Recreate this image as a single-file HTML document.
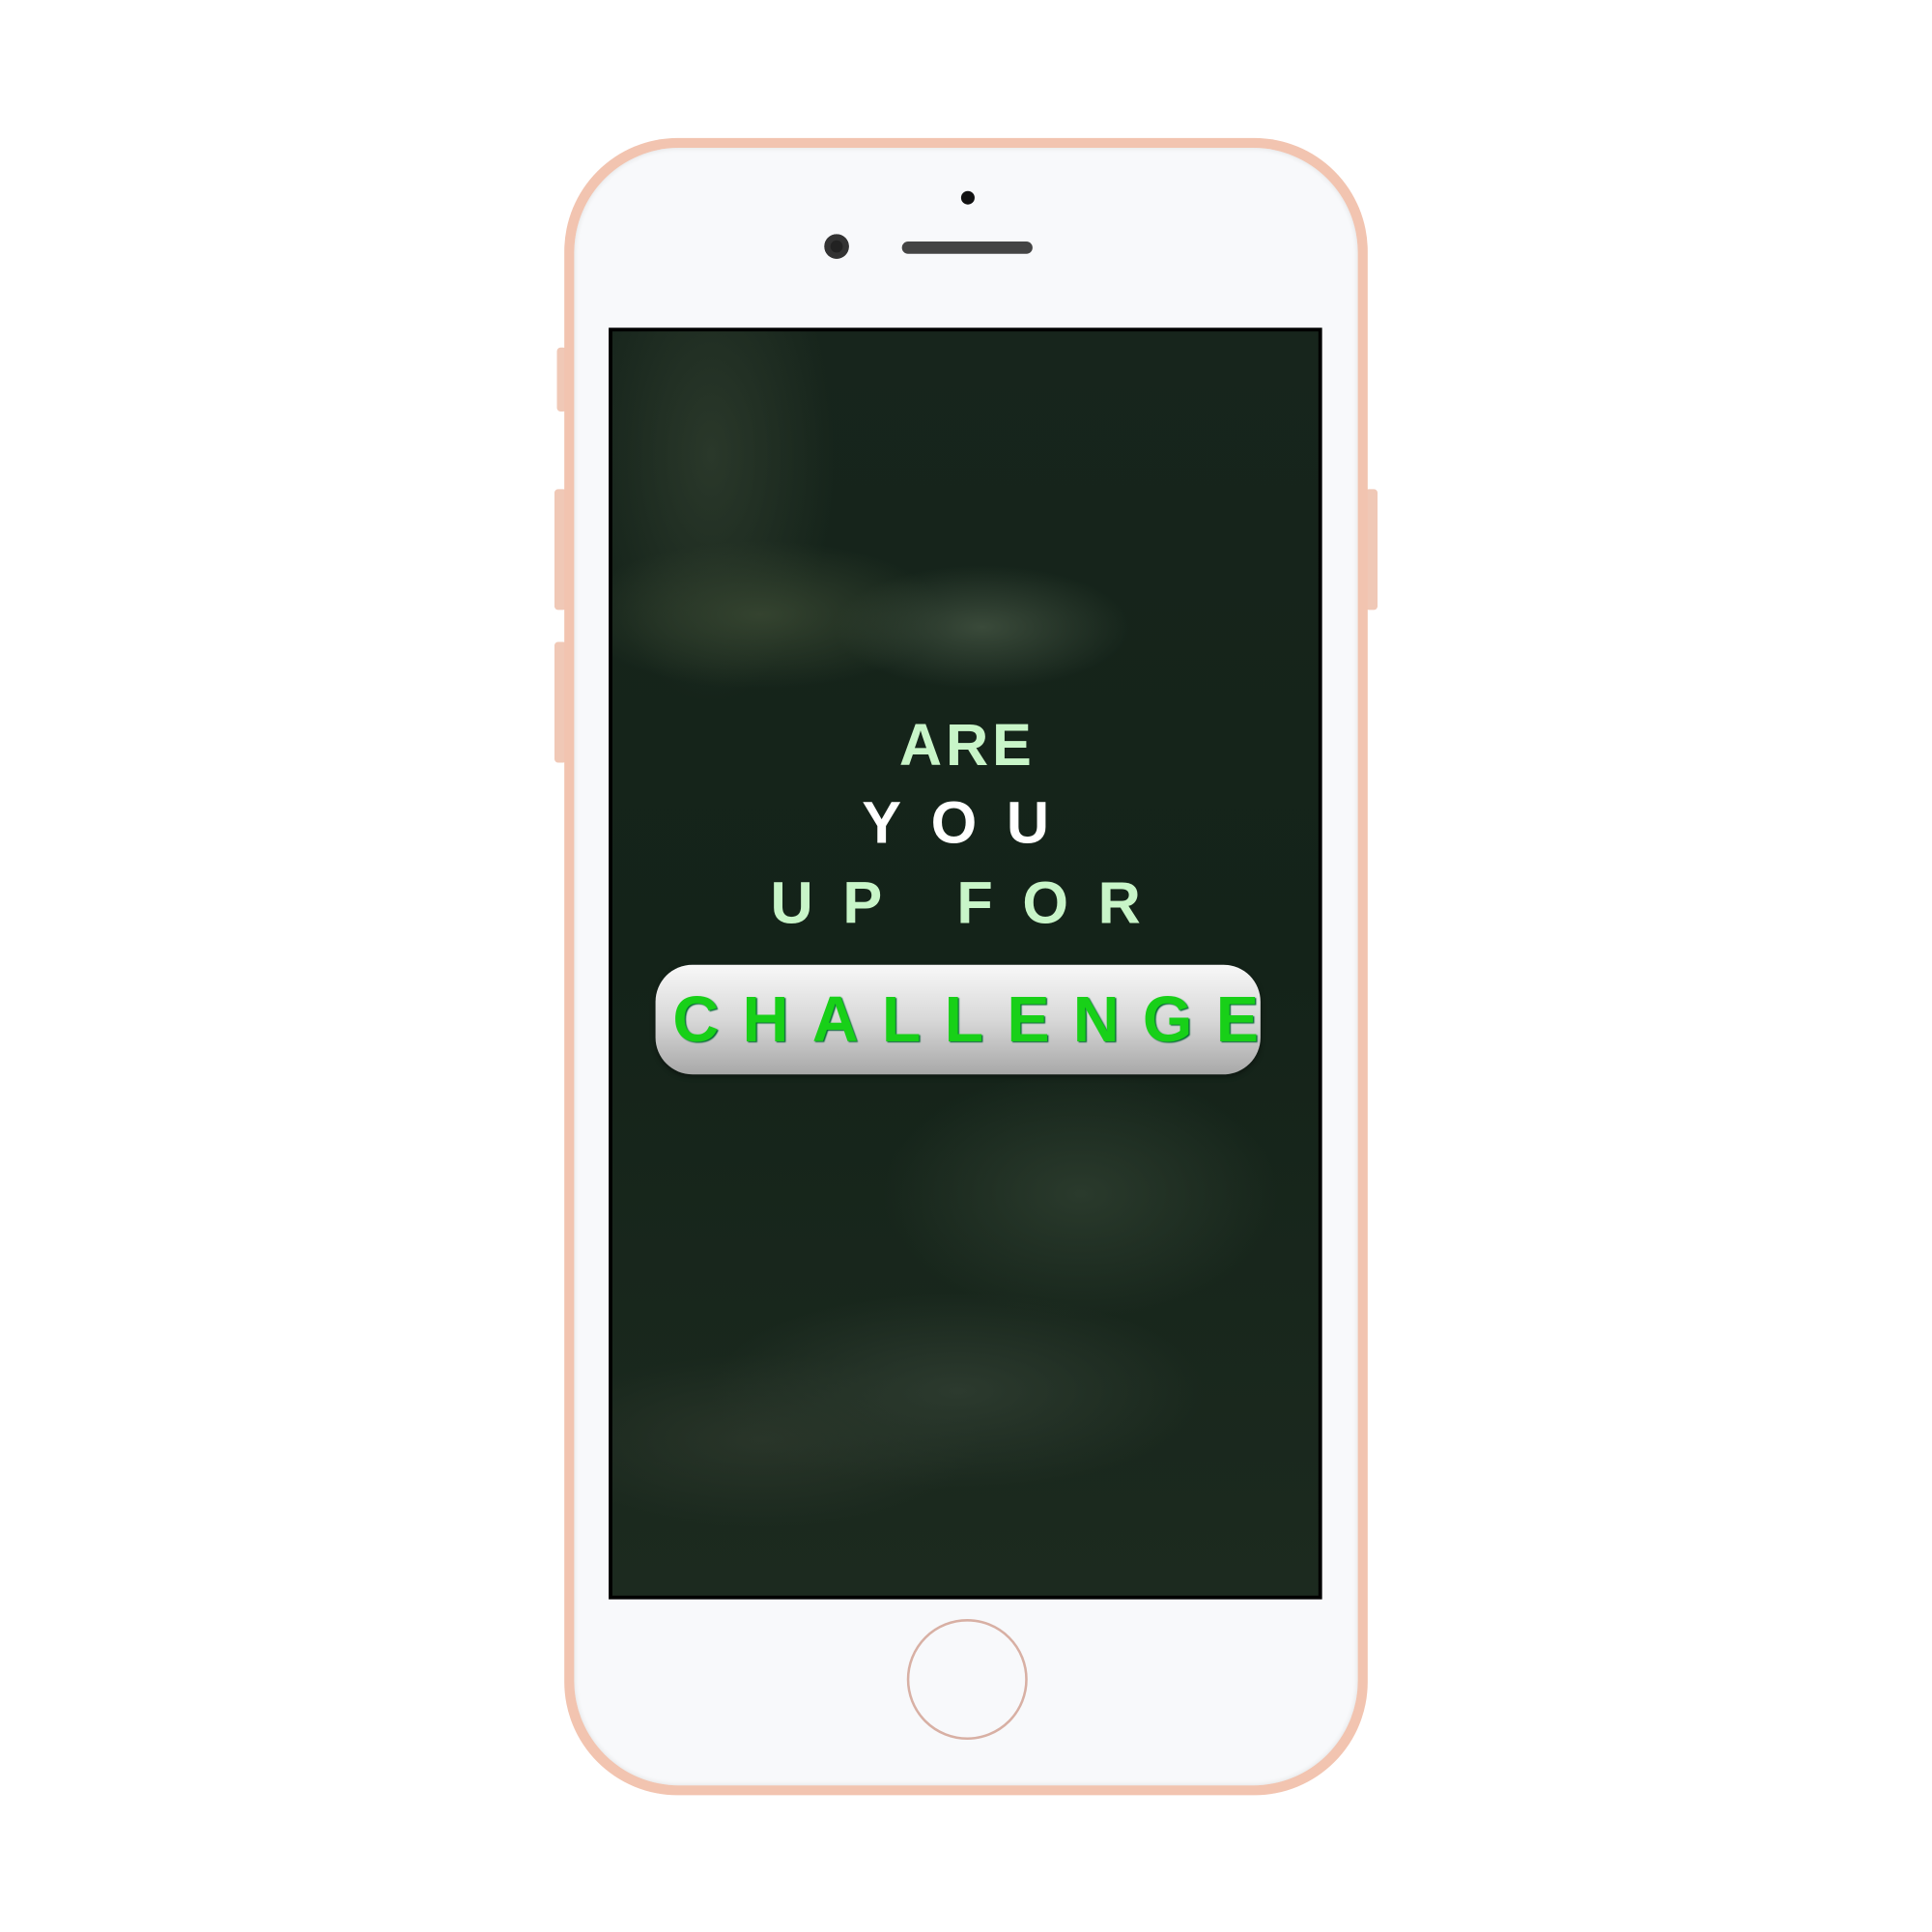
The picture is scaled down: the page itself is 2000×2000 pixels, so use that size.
<!DOCTYPE html>
<html><head><meta charset="utf-8"><style>
html,body{margin:0;padding:0;background:#fff;width:2000px;height:2000px;overflow:hidden}
#c{position:absolute;left:0;top:0;width:1568px;height:1568px;transform:scale(1.27551);transform-origin:0 0}
.abs{position:absolute}
.t{position:absolute;left:494px;width:579px;text-align:center;font-family:"Liberation Sans",sans-serif;font-weight:bold;white-space:nowrap;box-sizing:border-box}
</style></head><body><div id="c">
<div class="abs" style="left:452px;top:282px;width:8px;height:52px;background:#f0c8b6;border-radius:3px"></div>
<div class="abs" style="left:450px;top:397px;width:10px;height:98px;background:#f0c8b6;border-radius:3px"></div>
<div class="abs" style="left:450px;top:521px;width:10px;height:98px;background:#f0c8b6;border-radius:3px"></div>
<div class="abs" style="left:1108px;top:397px;width:10px;height:98px;background:#f0c8b6;border-radius:3px"></div>
<div class="abs" style="left:458px;top:112px;width:652px;height:1345px;border-radius:92px;background:#f2c4b0"></div>
<div class="abs" style="left:466px;top:120px;width:636px;height:1329px;border-radius:85px;background:#f8f9fb;box-shadow:inset 0 0 4px #ddd"></div>
<div class="abs" style="left:780px;top:155px;width:11px;height:11px;border-radius:50%;background:#111"></div>
<div class="abs" style="left:669px;top:190px;width:20px;height:20px;border-radius:50%;background:#222;box-shadow:inset 0 0 0 5px #333"></div>
<div class="abs" style="left:732px;top:196px;width:106px;height:10px;border-radius:5px;background:#444"></div>
<div class="abs" style="left:736px;top:1314px;width:98px;height:98px;border-radius:50%;border:2px solid #d8b0a4;box-sizing:border-box"></div>
<div class="abs" style="left:494px;top:266px;width:579px;height:1032px;background:#000"></div>
<div class="abs" style="left:497px;top:269px;width:573px;height:1026px;overflow:hidden;
background:
radial-gradient(ellipse 120px 50px at 300px 240px,#3a4a3a,transparent),
radial-gradient(ellipse 200px 80px at 280px 860px,#2c3a2e,transparent),
radial-gradient(ellipse 180px 70px at 120px 900px,#293529,transparent),
radial-gradient(ellipse 150px 60px at 120px 230px,#34432f,transparent),
radial-gradient(ellipse 100px 200px at 80px 100px,#2a382a,transparent),
radial-gradient(ellipse 160px 100px at 380px 700px,#2a3a2c,transparent),
linear-gradient(#17251c,#142319 50%,#1c2a1f);"></div>
<div class="t" style="top:578px;font-size:48px;color:#c8f5c8;letter-spacing:3px;padding-left:3px">ARE</div>
<div class="t" style="top:641px;font-size:48px;color:#fff;letter-spacing:24px;padding-left:8px">YOU</div>
<div class="t" style="top:706px;font-size:48px;color:#c8f5c8;letter-spacing:24px;padding-left:8px">UP FOR</div>
<div class="abs" style="left:532px;top:783px;width:491px;height:89px;border-radius:30px;background:linear-gradient(#f8f8f8,#d8d8d8 50%,#a8a8a8);box-shadow:0 2px 4px rgba(0,0,0,.4)"></div>
<div class="t" style="left:532px;width:491px;top:798px;font-size:52px;color:#18d018;letter-spacing:19px;padding-left:14px;text-shadow:1px 1px 1px #063">CHALLENGE</div>
</div></body></html>
